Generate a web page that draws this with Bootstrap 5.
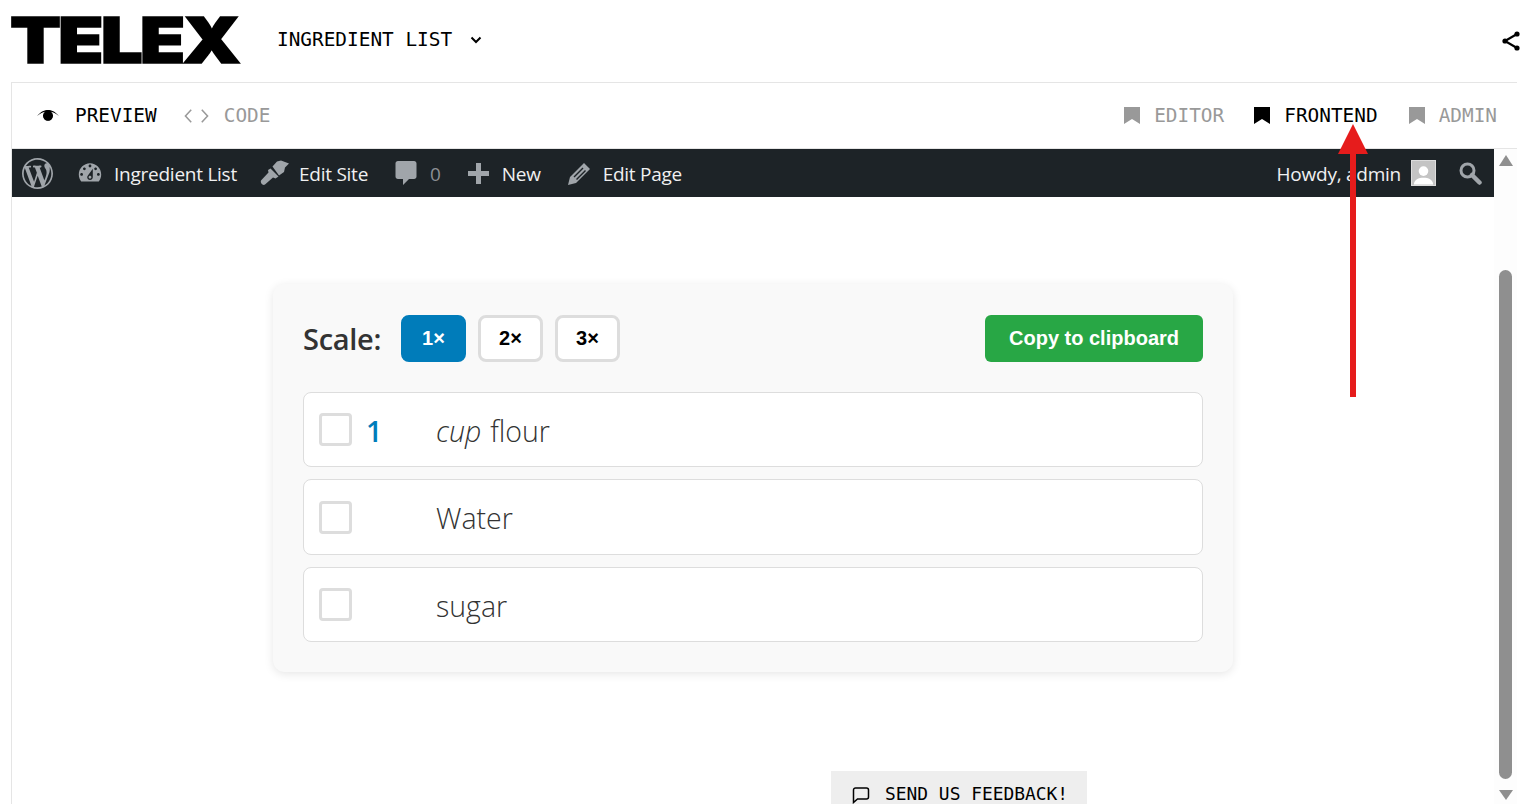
<!DOCTYPE html>
<html lang="en">
<head>
    <meta charset="UTF-8">
    <title>Telex - Ingredient List</title>
    <link href="https://cdn.jsdelivr.net/npm/bootstrap@5.3.0/dist/css/bootstrap.min.css" rel="stylesheet">
    <style>
        html, body { height: 804px; overflow: hidden; }
        body { background: #fff; color: #000; font-family: "Open Sans", "Liberation Sans", sans-serif; position: relative; }
        .mono { font-family: "DejaVu Sans Mono", "Liberation Mono", monospace; }

        .top-bar { height: 82px; padding-left: 10px; padding-right: 1px; }
        .telex-logo { font-family: "Inter", "Liberation Sans", sans-serif; font-weight: 900; font-size: 63px; line-height: 48px; letter-spacing: -2.5px; -webkit-text-stroke: 1.500px #000; width: 230px; margin-top: -2px; transform: scaleX(1.18); transform-origin: left center; }
        .doc-title { font-size: 19.400px; margin-left: 37px; margin-top: -2px; }
        .doc-title svg { margin-left: 17px; }

        .frame { margin-left: 11px; margin-right: 5px; border-top: 1px solid #e5e5e5; border-left: 1px solid #e5e5e5; height: 722px; }
        .tool-bar { height: 66px; padding: 1px 20px 0 24px; border-bottom: 1px solid #e5e5e5; font-size: 19.400px; }
        .tool-item { color: #999; }
        .tool-item.on { color: #000; }
        .tool-item svg { fill: currentColor; margin-right: 14px; flex: none; }

        .site-view { height: 655px; }
        .admin-bar { height: 48px; background: #1d2327; color: #f0f0f1; font-size: 19px; padding: 2px 12px 0 10px; letter-spacing: -.25px; }
        .admin-bar svg { fill: #a0a5aa; display: block; margin-top: -2px; }
        .zero-count { color: #8c8f94; }
        .avatar-box { width: 25px; height: 26px; margin-top: -2px; background: #c4c4c4; overflow: hidden; border: 1px solid #ddd; }
        .avatar-box svg { fill: #fff; margin-top: 0; }

        .recipe-card { width: 960px; height: 388px; margin: 87px 0 0 261px; padding: 31px 30px; background: #f9f9f9; border-radius: 12px; box-shadow: 0 2px 10px rgba(0,0,0,.1); }
        .scale-label { font-size: 29px; font-weight: 600; color: #333; line-height: 47px; letter-spacing: -.3px; width: 90px; }
        .scale-btn { width: 65px; height: 47px; padding: 0 0 2px; background: #fff; color: #000; border: 3px solid #ddd; border-radius: 8px; font-family: "Liberation Sans", sans-serif; font-size: 20px; font-weight: 700; }
        .scale-btn.on { background: #007cba; border-color: #007cba; color: #fff; }
        .copy-btn { width: 218px; height: 47px; padding: 0 0 2px; background: #28a745; border: 0; border-radius: 6px; color: #fff; font-family: "Liberation Sans", sans-serif; font-size: 20px; font-weight: 700; }
        .ingredient-row { height: 75px; margin-top: 12px; padding-left: 15px; background: #fff; border: 1px solid #ddd; border-radius: 8px; font-size: 28.500px; font-weight: 300; color: #333; }
        .ingredient-row.first { margin-top: 30px; }
        .ingredient-row.tall { height: 76px; }
        .tick-box { width: 33px; height: 33px; border: 3px solid #ddd; border-radius: 4px; margin-right: 15px; background: #fff; flex: none; }
        .row-text { padding-top: 4px; }
        .tall .row-text { padding-top: 2px; }
        .qty-text { width: 69px; margin-left: -1px; color: #007cba; font-weight: 600; flex: none; }
        .spacer-text { width: 69px; flex: none; }
        .unit-text { font-style: italic; margin-left: 1px; margin-right: 9px; }

        .feedback-tab { width: 256px; height: 33px; margin: 99px 0 0 819px; padding: 13px 0 0 21px; background: #eee; font-size: 17.900px; line-height: 20px; overflow: hidden; }

        .fake-scroll { width: 23px; background: #fdfdfd; padding: 6px 5px 0; }
        .scroll-thumb { height: 509px; margin-top: 104px; background: #8f8f8f; border-radius: 7px; }
        .scroll-up { width: 14px; height: 11px; background: #8f8f8f; clip-path: polygon(50% 0, 100% 100%, 0 100%); }
        .scroll-down { width: 14px; height: 10px; background: #8f8f8f; clip-path: polygon(0 0, 100% 0, 50% 100%); margin-top: 11px; }

        .red-arrow { position: absolute; left: 1336px; top: 124px; }
    </style>
</head>

<body>

    <div class="top-bar d-flex align-items-center">
        <div class="telex-logo">TELEX</div>
        <div class="doc-title mono d-flex align-items-center">INGREDIENT LIST
            <svg width="14" height="14" viewBox="0 0 14 14"><path d="M2.500 4.500L7 9l4.500-4.500" fill="none" stroke="#000" stroke-width="2"/></svg>
        </div>
        <svg class="ms-auto" width="20" height="24" viewBox="0 0 20 24"><path d="M16 5L4 12l12 7" fill="none" stroke="#000" stroke-width="2.200"/><circle cx="16" cy="5" r="2.600"/><circle cx="4" cy="12" r="2.600"/><circle cx="16" cy="19" r="2.600"/></svg>
    </div>

    <div class="frame">
        <div class="tool-bar mono d-flex align-items-center">
            <div class="tool-item on d-flex align-items-center">
                <svg width="24" height="14" viewBox="0 0 24 14" style="margin-right:15px"><path d="M1 7C5 2.500 8.500 1 12 1s7 1.500 11 6C19.500 4.500 17 3.300 15 2.800a5 5 0 1 1-6 0C7 3.300 4.500 4.500 1 7z"/><circle cx="12" cy="7" r="4.500"/></svg>
                PREVIEW
            </div>
            <div class="tool-item d-flex align-items-center" style="margin-left:27px">
                <svg width="25" height="16" viewBox="0 0 26 16" style="margin-right:15px"><path d="M7.500 1.500L1.500 8l6 6.500M18.500 1.500l6 6.500-6 6.500" fill="none" stroke="#999" stroke-width="1.600"/></svg>
                CODE
            </div>
            <div class="tool-item d-flex align-items-center ms-auto">
                <svg width="16" height="17" viewBox="0 0 16 17"><path d="M0 0h16v17l-8-5-8 5z"/></svg>
                <span>EDITOR</span>
            </div>
            <div class="tool-item on d-flex align-items-center" style="margin-left:30px">
                <svg width="16" height="17" viewBox="0 0 16 17"><path d="M0 0h16v17l-8-5-8 5z"/></svg>
                <span>FRONTEND</span>
            </div>
            <div class="tool-item d-flex align-items-center" style="margin-left:31px">
                <svg width="16" height="17" viewBox="0 0 16 17"><path d="M0 0h16v17l-8-5-8 5z"/></svg>
                <span>ADMIN</span>
            </div>
        </div>

        <div class="site-view d-flex">
            <div class="flex-grow-1">
                <div class="admin-bar d-flex align-items-center">
                    <svg width="31" height="31" viewBox="0 0 20 20"><path d="M20 10c0-5.510-4.490-10-10-10C4.480 0 0 4.490 0 10c0 5.520 4.480 10 10 10 5.510 0 10-4.480 10-10zM7.780 15.370L4.370 6.220c.55-.02 1.170-.08 1.170-.08.5-.06.44-1.130-.06-1.110 0 0-1.450.11-2.370.11-.18 0-.37 0-.58-.01C4.120 2.690 6.870 1.110 10 1.110c2.330 0 4.450.87 6.050 2.340-.68-.11-1.650.39-1.650 1.580 0 .74.45 1.360.9 2.100.35.61.55 1.360.55 2.460 0 1.490-1.400 5-1.400 5l-3.030-8.370c.54-.02.82-.17.82-.17.5-.05.44-1.250-.06-1.220 0 0-1.440.12-2.380.12-.87 0-2.330-.12-2.330-.12-.5-.03-.56 1.200-.06 1.220l.92.08 1.260 3.410zM17.410 10c.24-.64.74-1.870.43-4.250.7 1.290 1.050 2.710 1.050 4.250 0 3.290-1.730 6.240-4.400 7.780.97-2.590 1.940-5.200 2.920-7.780zM6.100 18.090C3.120 16.650 1.110 13.530 1.110 10c0-1.300.23-2.480.72-3.590C3.250 10.300 4.670 14.200 6.100 18.090zm4.030-6.630l2.580 6.980c-.86.29-1.760.45-2.710.45-.79 0-1.570-.11-2.290-.33.81-2.380 1.620-4.740 2.420-7.100z"/></svg>
                    <svg width="28" height="28" viewBox="0 0 20 20" style="margin-left:23px"><path fill-rule="evenodd" d="M3.760 16h12.480c1.100-1.370 1.760-3.110 1.760-5 0-4.420-3.580-8-8-8s-8 3.580-8 8c0 1.890.66 3.630 1.760 5zM10 4c.55 0 1 .45 1 1s-.45 1-1 1-1-.45-1-1 .45-1 1-1zM6 6c.55 0 1 .45 1 1s-.45 1-1 1-1-.45-1-1 .45-1 1-1zm8 0c.55 0 1 .45 1 1s-.45 1-1 1-1-.45-1-1 .45-1 1-1zm-5.370 5.550L12 7v6c0 1.100-.9 2-2 2s-2-.9-2-2c0-.57.24-1.080.63-1.450zM4 10c.55 0 1 .45 1 1s-.45 1-1 1-1-.45-1-1 .45-1 1-1zm12 0c.55 0 1 .45 1 1s-.45 1-1 1-1-.45-1-1 .45-1 1-1zm-5 3c0-.55-.45-1-1-1s-1 .45-1 1 .45 1 1 1 1-.45 1-1z"/></svg>
                    <span style="margin-left:10px">Ingredient List</span>
                    <svg width="29" height="26" viewBox="0 0 29 26" style="margin-left:23px"><path d="M12.500 6.500L17 1.500 21 .5l8 3-4 4-1 4.500-5 3.500zM10.500 8.500l8 8-3 2-2.500-1-8 7c-2 1.500-5-1.500-4-4l7.500-8-.5-2.500z"/></svg>
                    <span style="margin-left:10px">Edit Site</span>
                    <svg width="22" height="26" viewBox="0 0 22 26" style="margin-left:27px"><path d="M3 1h16c1.500 0 2.500 1 2.500 2.500v13c0 1.500-1 2.500-2.500 2.500h-5l-6 6v-6H3c-1.500 0-2.500-1-2.500-2.500v-13C.5 2 1.500 1 3 1z"/></svg>
                    <span class="zero-count" style="margin-left:13px">0</span>
                    <svg width="21" height="21" viewBox="0 0 21 21" style="margin-left:27px"><path d="M8 0h5v8h8v5h-8v8H8v-8H0V8h8z"/></svg>
                    <span style="margin-left:13px">New</span>
                    <svg width="23" height="23" viewBox="0 0 23 23" style="margin-left:27px"><path fill-rule="evenodd" d="M16 1l6 6L8 21l-8 2 2-8zM14.500 5.500l-9 9 1 1 9-9zM17 8l-9 9 1 1 9-9z"/></svg>
                    <span style="margin-left:12px">Edit Page</span>
                    <span class="ms-auto">Howdy, admin</span>
                    <div class="avatar-box" style="margin-left:10px"><svg width="23" height="24" viewBox="0 0 24 24"><circle cx="12" cy="10" r="5"/><path d="M2 24c0-5 5-7 10-7s10 2 10 7z"/></svg></div>
                    <svg width="24" height="24" viewBox="0 0 24 24" style="margin-left:22px"><circle cx="9.500" cy="9.500" r="6.500" fill="none" stroke="#a0a5aa" stroke-width="3"/><path d="M14 14l7.500 7.500" stroke="#a0a5aa" stroke-width="4.500" stroke-linecap="round"/></svg>
                </div>

                <div class="recipe-card">
                    <div class="d-flex align-items-center gap-2">
                        <div class="scale-label">Scale:</div>
                        <button class="scale-btn on btn">1×</button>
                        <button class="scale-btn btn" style="margin-left:4px">2×</button>
                        <button class="scale-btn btn" style="margin-left:4px">3×</button>
                        <button class="copy-btn btn ms-auto">Copy to clipboard</button>
                    </div>
                    <div class="ingredient-row first d-flex align-items-center">
                        <div class="tick-box"></div>
                        <div class="qty-text row-text">1</div>
                        <div class="unit-text row-text">cup</div>
                        <div class="row-text">flour</div>
                    </div>
                    <div class="ingredient-row tall d-flex align-items-center">
                        <div class="tick-box"></div>
                        <div class="spacer-text"></div>
                        <div class="row-text">Water</div>
                    </div>
                    <div class="ingredient-row d-flex align-items-center">
                        <div class="tick-box"></div>
                        <div class="spacer-text"></div>
                        <div class="row-text">sugar</div>
                    </div>
                </div>

                <div class="feedback-tab mono d-flex align-items-start">
                    <svg width="18" height="18" viewBox="0 0 18 18" class="flex-shrink-0" style="margin-right:15px;margin-top:2px"><path d="M3.500 2h11A2 2 0 0 1 16.500 4v7a2 2 0 0 1-2 2H5.500L1.500 16.500V4a2 2 0 0 1 2-2z" fill="none" stroke="#000" stroke-width="1.500"/></svg>
                    SEND US FEEDBACK!
                </div>
            </div>

            <div class="fake-scroll">
                <div class="scroll-up"></div>
                <div class="scroll-thumb"></div>
                <div class="scroll-down"></div>
            </div>
        </div>
    </div>

    <svg class="red-arrow" width="34" height="274" viewBox="0 0 34 274"><path d="M17 0l15 30H20v243h-6V30H2z" fill="#e61c1c"/></svg>

</body>

</html>
